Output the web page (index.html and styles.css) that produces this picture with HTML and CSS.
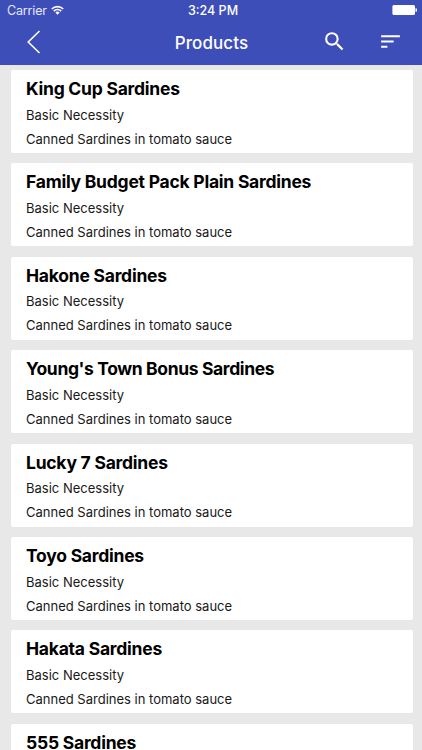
FILE: index.html
```html
<!DOCTYPE html>
<html lang="en">
<head>
<meta charset="utf-8">
<title>Products</title>
<link rel="stylesheet" href="styles.css">
</head>
<body>
<header class="header">
  <div class="status">
    <span class="carrier">Carrier <svg class="wifi" width="13" height="10" viewBox="0 0 14 10"><g fill="none" stroke="#fff" stroke-width="1.7"><path d="M.8 3.9a8.8 8.8 0 0 1 12.4 0"/><path d="M3 6.2a5.6 5.6 0 0 1 8 0"/></g><path d="M4.7 7.7a3.2 3.2 0 0 1 4.6 0L7 10z" fill="#fff"/></svg></span>
    <span class="clock">3:24 PM</span>
    <svg class="battery" width="25" height="10" viewBox="0 0 25 10"><rect x=".4" width="22.6" height="10" rx="1.5" fill="#fff"/><path d="M23.5 3.2a1.8 1.8 0 0 1 0 3.6z" fill="#fff"/></svg>
  </div>
  <nav class="bar">
    <svg class="back" width="14" height="24" viewBox="0 0 14 24"><path d="M12.5 1L1.2 12l11.3 11" fill="none" stroke="#fff" stroke-width="1.6"/></svg>
    <h1 class="title">Products</h1>
    <div class="actions">
      <svg width="25" height="25" viewBox="0 0 24 24" fill="#fff"><path d="M15.5 14h-.79l-.28-.27A6.47 6.47 0 0 0 16 9.5 6.5 6.5 0 1 0 9.5 16c1.61 0 3.09-.59 4.23-1.57l.27.28v.79l5 4.99L20.49 19l-4.99-5zm-6 0C7.01 14 5 11.99 5 9.5S7.01 5 9.5 5 14 7.01 14 9.5 11.99 14 9.5 14z"/></svg>
      <svg width="25" height="25" viewBox="0 0 24 24" fill="#fff"><path d="M3 18h6v-2H3v2zM3 6v2h18V6H3zm0 7h12v-2H3v2z"/></svg>
    </div>
  </nav>
</header>
<main class="list">
  <article class="card"><h2>King Cup Sardines</h2><p>Basic Necessity</p><p>Canned Sardines in tomato sauce</p></article>
  <article class="card"><h2>Family Budget Pack Plain Sardines</h2><p>Basic Necessity</p><p>Canned Sardines in tomato sauce</p></article>
  <article class="card"><h2>Hakone Sardines</h2><p>Basic Necessity</p><p>Canned Sardines in tomato sauce</p></article>
  <article class="card"><h2 class="snug">Young's Town Bonus Sardines</h2><p>Basic Necessity</p><p>Canned Sardines in tomato sauce</p></article>
  <article class="card"><h2>Lucky 7 Sardines</h2><p>Basic Necessity</p><p>Canned Sardines in tomato sauce</p></article>
  <article class="card"><h2>Toyo Sardines</h2><p>Basic Necessity</p><p>Canned Sardines in tomato sauce</p></article>
  <article class="card"><h2>Hakata Sardines</h2><p>Basic Necessity</p><p>Canned Sardines in tomato sauce</p></article>
  <article class="card"><h2>555 Sardines</h2></article>
</main>
</body>
</html>
```
FILE: styles.css
```css
* { box-sizing: border-box; margin: 0; padding: 0; }
body { height: 750px; overflow: hidden; background: #e8e8e8; color: #000; font-family: Inter, "Liberation Sans", sans-serif; }
svg { display: block; flex: none; }
.header { height: 65px; background: #3d4eb8; color: #fff; }
.status { height: 20px; display: grid; grid-template-columns: 1fr auto 1fr; align-items: center; padding: 0 5px 0 7px; font-size: 12.5px; }
.carrier { display: flex; align-items: center; gap: 4px; letter-spacing: -0.15px; color: #e6e8fa; }
.clock { font-weight: 500; position: relative; left: 1px; }
.battery { justify-self: end; }
.bar { height: 45px; display: grid; grid-template-columns: 1fr auto 1fr; align-items: center; padding: 0 19px 2px 27px; }
.title { font-size: 17px; font-weight: 500; letter-spacing: 0.1px; position: relative; left: -3.5px; top: 1px; }
.actions { display: flex; gap: 30.5px; justify-self: end; position: relative; top: -0.2px; left: -0.3px; }
.list { height: 685px; overflow: hidden; display: flex; flex-direction: column; gap: 10.4px; padding: 5px 9px 0 10.5px; }
.card { height: 83px; flex: none; background: #fff; border-radius: 2px; padding: 6px 15.5px; }
.card:last-child { height: 26.2px; border-radius: 2px 2px 0 0; padding-bottom: 0; }
.card h2 { font-size: 17.5px; line-height: 26px; font-weight: 700; letter-spacing: -0.24px; margin-bottom: 0.6px; }
.card .snug { letter-spacing: -0.37px; }
.card p { font-size: 13px; line-height: 24px; color: #181818; }
```
